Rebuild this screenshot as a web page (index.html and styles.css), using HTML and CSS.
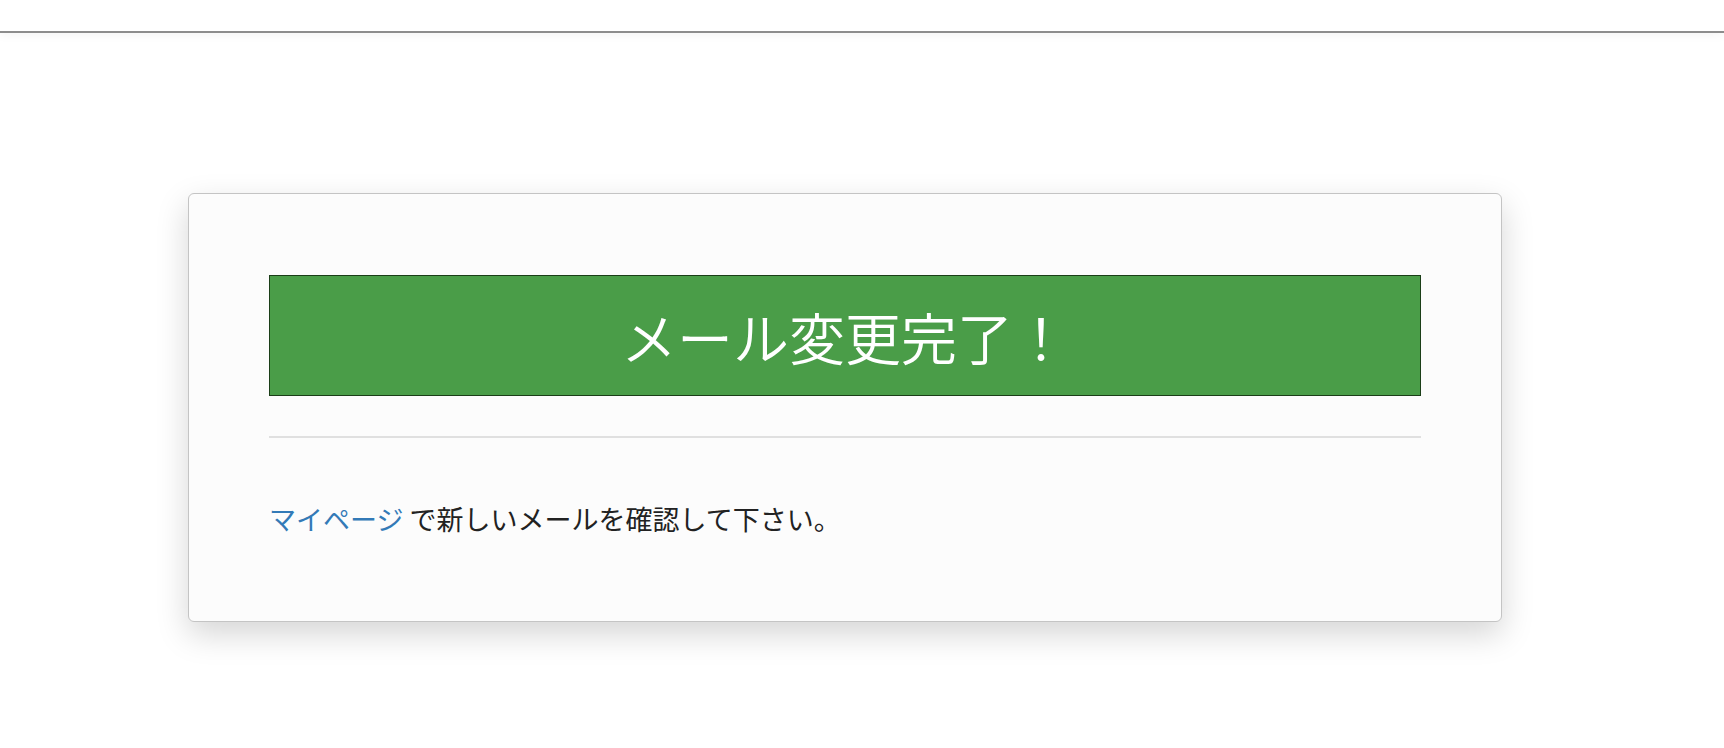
FILE: index.html
```html
<!DOCTYPE html>
<html lang="ja">
    <head>
        <meta charset="UTF-8">
        <meta name="viewport" content="width=device-width, initial-scale=1.0">
        <title>メール変更完了</title>
        <link rel="stylesheet" href="styles.css">
    </head>
    <body>
        <header class="topbar"></header>
        <main class="page">
            <section class="card">
                <h1 class="done">メール変更完了！</h1>
                <hr class="rule">
                <p class="note"><a href="#" class="link">マイページ</a> で新しいメールを確認して下さい。</p>
            </section>
        </main>
    </body>
</html>
```

FILE: styles.css
```css
html, body {
    min-height: 100%;
}
body {
    background: #fff;
    color: #222;
    font-family: "Noto Sans CJK JP", "Noto Sans", sans-serif;
    margin: 0;
}
.topbar {
    height: 31px;
    border-bottom: 2px solid #8c8c8c;
    box-shadow: 0 2px 10px rgba(0, 0, 0, 0.05);
}
.page {
    padding: 160px 222px 130px 188px;
}
.card {
    background: #fcfcfc;
    border: 1px solid #c4c4c4;
    border-radius: 6px;
    box-shadow: 0 12px 32px rgba(0, 0, 0, 0.17);
    padding: 81px 80px 82px;
}
.done {
    background: #4a9d48;
    border: 1px solid #1b3e18;
    color: #fff;
    font-size: 56px;
    font-weight: 350;
    height: 121px;
    box-sizing: border-box;
    display: flex;
    align-items: center;
    justify-content: center;
    margin: 0;
}
.rule {
    border: 0;
    border-top: 2px solid #e0e0e0;
    margin: 40px 0 0;
}
.note {
    font-size: 27px;
    font-weight: 400;
    line-height: 40px;
    margin: 61px 0 0;
}
.link {
    color: #337ab7;
    text-decoration: none;
}
```
